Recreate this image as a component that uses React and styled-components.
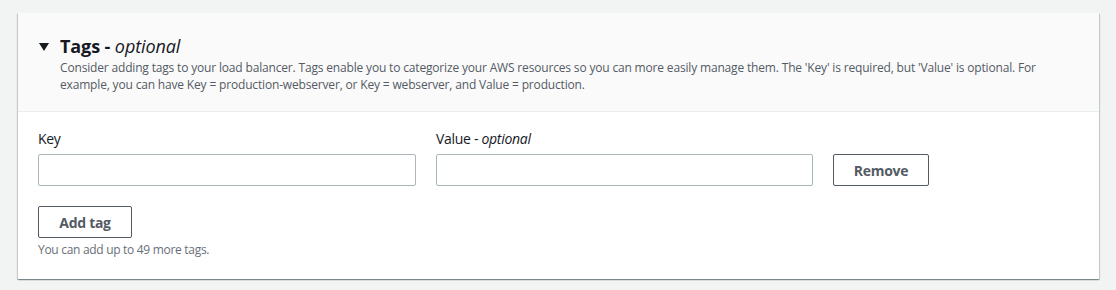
import React from "react";
import styled, { createGlobalStyle } from "styled-components";

const Global = createGlobalStyle`
  html, body { margin: 0; padding: 0; background: #f2f3f3; }
  body { font-family: "Open Sans", "Noto Sans", sans-serif; color: #16191f; }
  * { box-sizing: border-box; }
`;

const Page = styled.div`
  padding: 13px 17px 12px 18px;
`;

const Card = styled.section`
  background: #fff;
  box-shadow: 0 1px 1px 0 rgba(0, 28, 36, 0.3), 1px 1px 1px 0 rgba(0, 28, 36, 0.15), -1px 1px 1px 0 rgba(0, 28, 36, 0.15);
`;

const Header = styled.div`
  background: #fafafa;
  border-bottom: 1px solid #eaeded;
  padding: 22px 20px 18px 20px;
  display: flex;
  gap: 10px;
`;

const Caret = styled.svg`
  width: 12px;
  height: 12px;
  margin-top: 6px;
  flex: none;
`;

const HeaderText = styled.div`
  display: flex;
  flex-direction: column;
`;

const Title = styled.h2`
  margin: 0;
  font-size: 18px;
  line-height: 22px;
  font-weight: 700;
  color: #16191f;
  letter-spacing: -0.1px;
  em { font-weight: 400; font-style: italic; }
`;

const Description = styled.p`
  margin: 2px 0 0;
  font-size: 12px;
  line-height: 17px;
  color: #545b64;
  letter-spacing: -0.17px;
`;

const Body = styled.div`
  padding: 18px 20px 21px 20px;
`;

const Row = styled.div`
  display: grid;
  grid-template-columns: 378px 377px auto;
  column-gap: 20px;
  align-items: end;
`;

const Field = styled.label`
  display: flex;
  flex-direction: column;
  gap: 6px;
`;

const Label = styled.span`
  font-size: 14px;
  line-height: 18px;
  color: #16191f;
  letter-spacing: -0.3px;
  em { font-style: italic; }
`;

const Input = styled.input`
  height: 32px;
  width: 100%;
  border: 1px solid #aab7b8;
  border-radius: 2px;
  background: #fff;
  font: inherit;
`;

const Button = styled.button`
  height: 32px;
  width: ${(p) => p.$w}px;
  border: 1px solid #545b64;
  border-radius: 2px;
  background: #fff;
  color: #545b64;
  font-family: inherit;
  font-size: 14px;
  font-weight: 700;
  letter-spacing: -0.3px;
  padding: 0;
  cursor: pointer;
`;

const Footer = styled.div`
  margin-top: 20px;
  display: flex;
  flex-direction: column;
  gap: 4px;
`;

const Hint = styled.span`
  font-size: 12px;
  line-height: 16px;
  color: #687078;
  letter-spacing: -0.3px;
`;

export default function App() {
  return (
    <>
      <Global />
      <Page>
        <Card>
          <Header>
            <Caret viewBox="0 0 12 12">
              <path d="M1 2 H11 L6 10 Z" fill="#16191f" />
            </Caret>
            <HeaderText>
              <Title>
                Tags - <em>optional</em>
              </Title>
              <Description>
                Consider adding tags to your load balancer. Tags enable you to categorize your AWS resources so you can more easily manage them. The 'Key' is required, but 'Value' is optional. For
                <br />
                example, you can have Key = production-webserver, or Key = webserver, and Value = production.
              </Description>
            </HeaderText>
          </Header>
          <Body>
            <Row>
              <Field>
                <Label>Key</Label>
                <Input />
              </Field>
              <Field>
                <Label>
                  Value - <em>optional</em>
                </Label>
                <Input />
              </Field>
              <Button $w={96}>Remove</Button>
            </Row>
            <Footer>
              <div>
                <Button $w={94}>Add tag</Button>
              </div>
              <Hint>You can add up to 49 more tags.</Hint>
            </Footer>
          </Body>
        </Card>
      </Page>
    </>
  );
}
